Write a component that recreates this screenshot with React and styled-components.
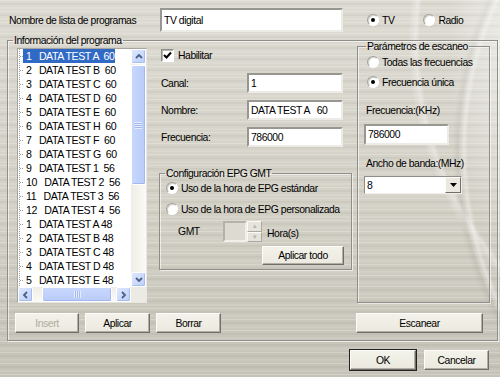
import React from 'react'
import styled, { createGlobalStyle } from 'styled-components'

const GlobalStyle = createGlobalStyle`
  html, body { margin: 0; padding: 0; }
  body {
    font-family: "Liberation Sans", Arial, sans-serif;
    font-size: 10.4px;
    letter-spacing: -0.45px;
    color: #000;
  }
`

const programs = [
  ['1', 'DATA TEST A', '60'],
  ['2', 'DATA TEST B', '60'],
  ['3', 'DATA TEST C', '60'],
  ['4', 'DATA TEST D', '60'],
  ['5', 'DATA TEST E', '60'],
  ['6', 'DATA TEST H', '60'],
  ['7', 'DATA TEST F', '60'],
  ['8', 'DATA TEST G', '60'],
  ['9', 'DATA TEST 1', '56'],
  ['10', 'DATA TEST 2', '56'],
  ['11', 'DATA TEST 3', '56'],
  ['12', 'DATA TEST 4', '56'],
  ['1', 'DATA TEST A', '48'],
  ['2', 'DATA TEST B', '48'],
  ['3', 'DATA TEST C', '48'],
  ['4', 'DATA TEST D', '48'],
  ['5', 'DATA TEST E', '48'],
]

const Chevron = ({ dir }) => {
  const pts = {
    up: '1,5 4,2 7,5',
    down: '1,2 4,5 7,2',
    left: '5,1 2,4 5,7',
    right: '2,1 5,4 2,7',
  }[dir]
  return (
    <svg width="8" height="8" viewBox="0 0 8 8">
      <polyline points={pts} fill="none" stroke="#4d6185" strokeWidth="1.8" />
    </svg>
  )
}

const Radio = ({ checked, label }) => (
  <RadioRow>
    <RadioDot $checked={checked} />
    <span>{label}</span>
  </RadioRow>
)

export default function App() {
  return (
    <>
      <GlobalStyle />
      <Window>
        <TopRow>
          <TopLabel>Nombre de lista de programas</TopLabel>
          <TextBox $w={183} $h={24} defaultValue="TV digital" />
          <TopRadios>
            <Radio checked label="TV" />
            <Radio label="Radio" />
          </TopRadios>
        </TopRow>

        <ProgramGroup>
          <Legend>Información del programa</Legend>
          <GroupBody>
            <ListBox>
              <Items>
                {programs.map(([n, name, q], i) => (
                  <Item key={i}>
                    <Branch />
                    <ItemText $selected={i === 0}>
                      {`${n}   ${name}${q === '48' ? ' ' : '  '}${q}`}
                    </ItemText>
                  </Item>
                ))}
              </Items>
              <VScroll>
                <ScrollBtn><Chevron dir="up" /></ScrollBtn>
                <VTrack>
                  <VThumb><Grip $vertical /></VThumb>
                </VTrack>
                <ScrollBtn><Chevron dir="down" /></ScrollBtn>
              </VScroll>
              <HScroll>
                <ScrollBtn><Chevron dir="left" /></ScrollBtn>
                <HTrack>
                  <HThumb><Grip /></HThumb>
                </HTrack>
                <ScrollBtn><Chevron dir="right" /></ScrollBtn>
              </HScroll>
              <Corner />
            </ListBox>

            <Middle>
              <CheckRow>
                <CheckBox>
                  <svg width="9" height="9" viewBox="0 0 9 9">
                    <polyline points="1,4 3.5,6.5 8,1.5" fill="none" stroke="#000" strokeWidth="2" />
                  </svg>
                </CheckBox>
                <span>Habilitar</span>
              </CheckRow>
              <FieldRow $top={11}>
                <FieldLabel>Canal:</FieldLabel>
                <TextBox $w={96} $h={20} defaultValue="1" />
              </FieldRow>
              <FieldRow $top={7}>
                <FieldLabel>Nombre:</FieldLabel>
                <TextBox $w={96} $h={20} defaultValue="DATA TEST A   60" />
              </FieldRow>
              <FieldRow $top={7}>
                <FieldLabel>Frecuencia:</FieldLabel>
                <TextBox $w={96} $h={20} defaultValue="786000" />
              </FieldRow>

              <EpgGroup>
                <SmallLegend>Configuración EPG GMT</SmallLegend>
                <EpgRadios>
                  <Radio checked label="Uso de la hora de EPG estándar" />
                  <Radio label="Uso de la hora de EPG personalizada" />
                </EpgRadios>
                <GmtRow>
                  <GmtLabel>GMT</GmtLabel>
                  <Spin>
                    <SpinEdit />
                    <SpinButtons>
                      <SpinBtn>▴</SpinBtn>
                      <SpinBtn>▾</SpinBtn>
                    </SpinButtons>
                  </Spin>
                  <HoursLabel>Hora(s)</HoursLabel>
                </GmtRow>
                <ApplyAllRow>
                  <Button $w={82} $h={19}>Aplicar todo</Button>
                </ApplyAllRow>
              </EpgGroup>
            </Middle>

            <ScanGroup>
              <SmallLegend>Parámetros de escaneo</SmallLegend>
              <ScanRadios>
                <Radio label="Todas las frecuencias" />
                <Radio checked label="Frecuencia única" />
              </ScanRadios>
              <ScanLabel $top={14}>Frecuencia:(KHz)</ScanLabel>
              <ScanField>
                <TextBox $w={85} $h={21} defaultValue="786000" />
              </ScanField>
              <ScanLabel $top={12}>Ancho de banda:(MHz)</ScanLabel>
              <Combo>
                <ComboValue>8</ComboValue>
                <ComboBtn>
                  <svg width="7" height="4" viewBox="0 0 7 4">
                    <polygon points="0,0 7,0 3.5,4" fill="#000" />
                  </svg>
                </ComboBtn>
              </Combo>
            </ScanGroup>
          </GroupBody>

          <ActionRow>
            <Button $w={64} disabled>Insert</Button>
            <Button $w={65}>Aplicar</Button>
            <Button $w={65}>Borrar</Button>
            <ScanButton $w={127}>Escanear</ScanButton>
          </ActionRow>
        </ProgramGroup>

        <DialogRow>
          <Button $w={66} $default>OK</Button>
          <Button $w={65}>Cancelar</Button>
        </DialogRow>
      </Window>
    </>
  )
}

const Window = styled.div`
  width: 500px;
  height: 377px;
  box-sizing: border-box;
  overflow: hidden;
  padding: 8px 0 0 7px;
  display: flex;
  flex-direction: column;
  background:
    radial-gradient(ellipse 70px 260px at 505px 40px, rgba(255, 255, 255, 0.45), transparent 80%),
    radial-gradient(circle at 820px 150px, transparent 0 352px, rgba(255, 255, 255, 0.35) 356px, rgba(120, 118, 108, 0.12) 362px, transparent 368px),
    radial-gradient(circle at 760px 40px, transparent 0 340px, rgba(255, 255, 255, 0.35) 344px, transparent 352px),
    repeating-linear-gradient(
      180deg,
      rgba(255, 255, 255, 0.22) 0 1px,
      transparent 1px 3px,
      rgba(0, 0, 0, 0.035) 3px 5px,
      transparent 5px 7px,
      rgba(255, 255, 255, 0.1) 7px 9px,
      transparent 9px 11px
    ),
    linear-gradient(180deg, #dcdad1 0%, #d3d1c6 55%, #c5c3b7 100%);
`

const TopRow = styled.div`
  display: flex;
  align-items: center;
  height: 24px;
  padding-left: 2px;
`

const TopLabel = styled.span`
  width: 151px;
`

const TopRadios = styled.div`
  display: flex;
  gap: 29px;
  margin-left: 24px;
`

const RadioRow = styled.label`
  display: flex;
  align-items: center;
  gap: 3px;
  height: 16px;
  white-space: nowrap;
`

const RadioDot = styled.span`
  position: relative;
  width: 12px;
  height: 12px;
  box-sizing: border-box;
  border-radius: 50%;
  border: 1px solid;
  border-color: #a3a29b #ffffff #ffffff #a3a29b;
  background: #fff;
  box-shadow: inset 1px 1px 0 #d2d1c9;
  flex: none;
  &::after {
    content: '';
    display: ${p => (p.$checked ? 'block' : 'none')};
    position: absolute;
    left: 3px;
    top: 3px;
    width: 4px;
    height: 4px;
    border-radius: 50%;
    background: #000;
  }
`

const TextBox = styled.input.attrs({ readOnly: true })`
  width: ${p => p.$w}px;
  height: ${p => p.$h}px;
  box-sizing: border-box;
  margin: 0;
  padding: 0 2px;
  font: inherit;
  letter-spacing: inherit;
  color: #000;
  background: #fff;
  border: 2px solid;
  border-color: #979690 #ecebe5 #ecebe5 #979690;
  outline: none;
  white-space: pre;
`

const ProgramGroup = styled.fieldset`
  margin: 2px 0 0;
  padding: 0 14px 7px 9px;
  width: 491px;
  height: 307px;
  box-sizing: border-box;
  min-width: 0;
  border: 1px solid #8f8e88;
  box-shadow: inset 1px 1px 0 rgba(255, 255, 255, 0.6), 1px 1px 0 rgba(255, 255, 255, 0.6);
  display: flex;
  flex-direction: column;
`

const Legend = styled.legend`
  margin-left: -4px;
  padding: 0 1px;
  line-height: 13px;
`

const SmallLegend = styled.legend`
  margin-left: -1px;
  padding: 0 1px;
  line-height: 13px;
`

const GroupBody = styled.div`
  display: grid;
  grid-template-columns: 130px 193px 126px;
  column-gap: 12px;
  height: 256px;
  & > :nth-child(3) {
    margin-left: -7px;
  }
`

const ListBox = styled.div`
  margin-top: 1px;
  height: 255px;
  box-sizing: border-box;
  border: 1px solid #a5a49e;
  border-right-color: #e8e7e1;
  border-bottom-color: #e8e7e1;
  background: #fff;
  display: grid;
  grid-template-columns: 1fr 15px;
  grid-template-rows: 238px 15px;
`

const Items = styled.div`
  overflow: hidden;
  padding-left: 1px;
`

const Item = styled.div`
  display: flex;
  align-items: center;
  height: 14px;
`

const Branch = styled.span`
  flex: none;
  width: 4px;
  height: 14px;
  background:
    repeating-linear-gradient(to right, #9c9c9c 0 1px, transparent 1px 2px) 1px 7px / 3px 1px no-repeat,
    repeating-linear-gradient(to bottom, #9c9c9c 0 1px, transparent 1px 2px) 0 0 / 1px 14px no-repeat;
`

const ItemText = styled.span`
  white-space: pre;
  line-height: 14px;
  font-size: 10.6px;
  padding: 0 1px 0 3px;
  color: ${p => (p.$selected ? '#fff' : '#000')};
  background: ${p => (p.$selected ? '#316ac5' : 'transparent')};
`

const ScrollBtn = styled.div`
  width: 15px;
  height: 15px;
  box-sizing: border-box;
  display: flex;
  align-items: center;
  justify-content: center;
  border: 1px solid #fff;
  border-radius: 2px;
  background: linear-gradient(135deg, #dde7fe, #bccffa);
  box-shadow: inset -1px -1px 0 #a7bdf0;
`

const VScroll = styled.div`
  display: flex;
  flex-direction: column;
  background: linear-gradient(90deg, #eeede6, #fbfaf6);
`

const VTrack = styled.div`
  flex: 1;
  padding-top: 1px;
`

const VThumb = styled.div`
  height: 120px;
  box-sizing: border-box;
  border: 1px solid #fff;
  border-radius: 2px;
  background: linear-gradient(90deg, #c8d7fc, #b8ccf9);
  box-shadow: inset -1px -1px 0 #a3b9ee;
  display: flex;
  align-items: center;
  justify-content: center;
`

const HScroll = styled.div`
  display: flex;
  background: linear-gradient(180deg, #eeede6, #fbfaf6);
`

const HTrack = styled.div`
  flex: 1;
  padding-left: 9px;
`

const HThumb = styled.div`
  width: 70px;
  height: 15px;
  box-sizing: border-box;
  border: 1px solid #fff;
  border-radius: 2px;
  background: linear-gradient(180deg, #c8d7fc, #b8ccf9);
  box-shadow: inset -1px -1px 0 #a3b9ee;
  display: flex;
  align-items: center;
  justify-content: center;
`

const Grip = styled.span`
  width: 7px;
  height: 7px;
  background: repeating-linear-gradient(
    ${p => (p.$vertical ? '180deg' : '90deg')},
    #eef3ff 0 1px,
    #9fb5e8 1px 2px
  );
  opacity: 0.8;
`

const Corner = styled.div`
  background: #ecebe3;
`

const Middle = styled.div`
  display: flex;
  flex-direction: column;
`

const CheckRow = styled.label`
  display: flex;
  align-items: center;
  gap: 4px;
  height: 13px;
  margin-top: 2px;
  padding-left: 2px;
`

const CheckBox = styled.span`
  width: 13px;
  height: 13px;
  box-sizing: border-box;
  border: 1px solid;
  border-color: #8e8d87 #ffffff #ffffff #8e8d87;
  box-shadow: inset 1px 1px 0 #b9b8b0;
  background: #fff;
  display: flex;
  align-items: center;
  justify-content: center;
`

const FieldRow = styled.div`
  display: flex;
  align-items: center;
  margin-top: ${p => p.$top}px;
  padding-left: 2px;
`

const FieldLabel = styled.span`
  width: 86px;
`

const EpgGroup = styled.fieldset`
  margin: 20px 0 0;
  padding: 0 7px 3px 6px;
  height: 103px;
  box-sizing: border-box;
  min-width: 0;
  border: 1px solid #8f8e88;
  box-shadow: inset 1px 1px 0 rgba(255, 255, 255, 0.6), 1px 1px 0 rgba(255, 255, 255, 0.6);
  display: flex;
  flex-direction: column;
`

const EpgRadios = styled.div`
  display: flex;
  flex-direction: column;
  gap: 5px;
`

const GmtRow = styled.div`
  display: flex;
  align-items: center;
  margin-top: 4px;
  padding-left: 12px;
`

const GmtLabel = styled.span`
  width: 45px;
`

const Spin = styled.div`
  display: flex;
  height: 21px;
`

const SpinEdit = styled.div`
  width: 24px;
  box-sizing: border-box;
  border: 2px solid;
  border-color: #b3b2ab #f0efe9 #f0efe9 #b3b2ab;
  background: #dcdad1;
`

const SpinButtons = styled.div`
  display: flex;
  flex-direction: column;
  width: 15px;
`

const SpinBtn = styled.div`
  flex: 1;
  box-sizing: border-box;
  border: 1px solid;
  border-color: #fbfaf6 #a9a8a1 #a9a8a1 #fbfaf6;
  background: #e6e4da;
  color: #b6b4aa;
  font-size: 7px;
  line-height: 8px;
  text-align: center;
`

const HoursLabel = styled.span`
  margin-left: 5px;
  margin-top: 3px;
`

const ApplyAllRow = styled.div`
  display: flex;
  justify-content: flex-end;
  margin-top: 4px;
`

const Button = styled.button`
  width: ${p => p.$w}px;
  height: ${p => p.$h || 20}px;
  box-sizing: border-box;
  margin: 0;
  padding: 0;
  font: inherit;
  letter-spacing: inherit;
  color: ${p => (p.disabled ? '#aeac9f' : '#000')};
  background: linear-gradient(180deg, #f3f2ea, #ebe9df);
  border: 1px solid;
  border-color: #fdfcf8 #6f6e69 #6f6e69 #fdfcf8;
  box-shadow: ${p =>
    p.$default
      ? 'inset -1px -1px 0 #b0aea5, 0 0 0 1px #222'
      : 'inset -1px -1px 0 #b0aea5'};
`

const ScanGroup = styled.fieldset`
  margin: -7px 0 0;
  padding: 0 0 0 9px;
  height: 263px;
  box-sizing: border-box;
  min-width: 0;
  border: 1px solid #8f8e88;
  box-shadow: inset 1px 1px 0 rgba(255, 255, 255, 0.6), 1px 1px 0 rgba(255, 255, 255, 0.6);
  display: flex;
  flex-direction: column;
`

const ScanRadios = styled.div`
  display: flex;
  flex-direction: column;
  gap: 4px;
  margin-top: 1px;
`

const ScanLabel = styled.span`
  margin-top: ${p => p.$top}px;
  margin-left: -1px;
  line-height: 13px;
  white-space: nowrap;
`

const ScanField = styled.div`
  margin-top: 7px;
  margin-left: -3px;
`

const Combo = styled.div`
  margin-top: 6px;
  margin-left: -3px;
  width: 98px;
  height: 18px;
  box-sizing: border-box;
  border: 1px solid;
  border-color: #8e8d87 #f0efe9 #f0efe9 #8e8d87;
  background: #fff;
  display: flex;
  align-items: center;
`

const ComboValue = styled.span`
  flex: 1;
  padding-left: 2px;
`

const ComboBtn = styled.span`
  width: 16px;
  height: 16px;
  box-sizing: border-box;
  border: 1px solid;
  border-color: #fdfcf8 #6f6e69 #6f6e69 #fdfcf8;
  background: #ebe9df;
  display: flex;
  align-items: center;
  justify-content: center;
`

const ActionRow = styled.div`
  display: flex;
  gap: 6px;
  margin-top: 10px;
  margin-left: -2px;
`

const ScanButton = styled(Button)`
  margin-left: auto;
`

const DialogRow = styled.div`
  display: flex;
  justify-content: flex-end;
  gap: 8px;
  margin-top: 9px;
  padding-right: 11px;
`
